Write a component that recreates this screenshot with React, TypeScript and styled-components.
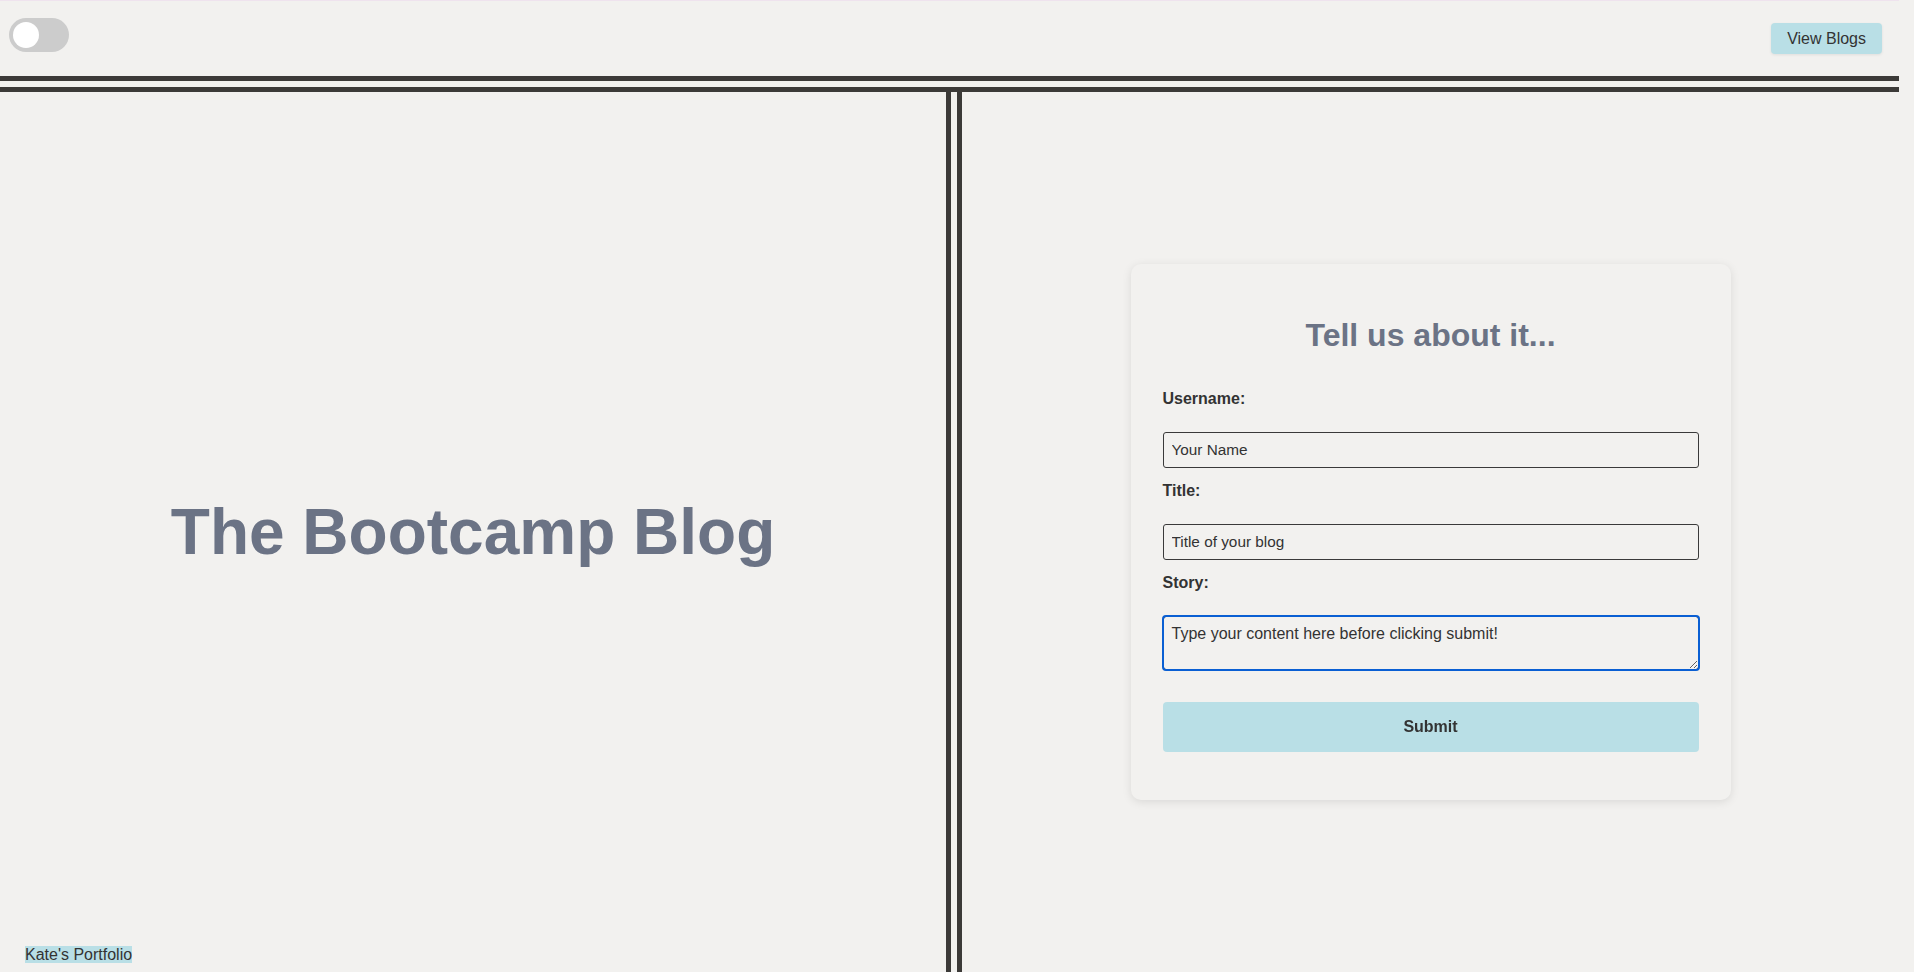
import React, { useEffect, useRef, useState } from 'react';
import styled, { createGlobalStyle } from 'styled-components';

const sans = `"Liberation Sans", Arial, sans-serif`;
const blue = '#b9dfe6';
const slate = '#6b7385';
const line = '#3c3a38';

const GlobalStyle = createGlobalStyle`
  html, body {
    margin: 0;
    padding: 0;
    background: #f2f1ef;
  }
  body {
    padding-right: 15px;
    font-family: ${sans};
    color: #333;
  }
  * {
    box-sizing: border-box;
  }
`;

const Header = styled.header`
  display: flex;
  justify-content: space-between;
  align-items: flex-start;
  height: 92px;
  padding: 17px 17px 0 9px;
  border-top: 1px solid #efe3ee;
  border-bottom: 16px double ${line};
`;

const Switch = styled.label`
  position: relative;
  display: inline-block;
  width: 60px;
  height: 34px;
  input {
    opacity: 0;
    width: 0;
    height: 0;
  }
`;

const Slider = styled.span<{ $on: boolean }>`
  position: absolute;
  inset: 0;
  cursor: pointer;
  background: ${(p) => (p.$on ? slate : '#ccc')};
  border-radius: 34px;
  transition: background 0.3s;
  &::before {
    content: '';
    position: absolute;
    width: 26px;
    height: 26px;
    left: 4px;
    bottom: 4px;
    background: #fff;
    border-radius: 50%;
    transform: translateX(${(p) => (p.$on ? '26px' : '0')});
    transition: transform 0.3s;
  }
`;

const ViewButton = styled.button`
  margin-top: 5px;
  height: 31px;
  padding: 0 16px;
  border: none;
  border-radius: 4px;
  background: ${blue};
  box-shadow: 0 1px 3px rgba(0, 0, 0, 0.08);
  color: #333;
  font-family: ${sans};
  font-size: 16px;
  cursor: pointer;
`;

const Main = styled.main`
  display: grid;
  grid-template-columns: 962px 1fr;
  height: calc(100vh - 92px);
`;

const LeftPanel = styled.section`
  display: flex;
  flex-direction: column;
  padding-top: 27px;
  border-right: 16px double ${line};
`;

const TitleWrap = styled.div`
  flex: 1;
  display: flex;
  align-items: center;
  justify-content: center;
`;

const BlogTitle = styled.h1`
  margin: 0;
  font-family: ${sans};
  font-size: 64px;
  line-height: 1;
  font-weight: 700;
  color: ${slate};
`;

const Footer = styled.footer`
  padding: 0 0 7px 25px;
  line-height: 20px;
`;

const PortfolioLink = styled.a`
  background: ${blue};
  color: #333;
  font-size: 16px;
  text-decoration: none;
`;

const RightPanel = styled.section`
  display: flex;
  align-items: center;
  justify-content: center;
`;

const Card = styled.form`
  width: 600px;
  padding: 51px 32px 48px;
  border-radius: 10px;
  background: #f2f1ef;
  box-shadow: 0 2px 10px rgba(0, 0, 0, 0.1);
`;

const FormTitle = styled.h2`
  margin: 0 0 34px;
  text-align: center;
  font-family: ${sans};
  font-size: 32px;
  line-height: 40px;
  font-weight: 700;
  color: ${slate};
`;

const Label = styled.label<{ $first?: boolean }>`
  display: block;
  margin: ${(p) => (p.$first ? '0' : '13px')} 0 23px;
  font-family: ${sans};
  font-size: 16px;
  line-height: 20px;
  font-weight: 700;
  color: #333;
`;

const TextInput = styled.input`
  display: block;
  width: 100%;
  height: 36px;
  padding: 0 8px;
  border: 1px solid #3a3a3a;
  border-radius: 3px;
  background: transparent;
  font-family: ${sans};
  font-size: 15.33px;
  color: #333;
  &::placeholder {
    color: #333;
  }
`;

const StoryInput = styled.textarea`
  display: block;
  width: 100%;
  height: 54px;
  padding: 8px 8px 6px;
  border: 1px solid #3a3a3a;
  border-radius: 3px;
  background: transparent;
  font-family: ${sans};
  font-size: 16px;
  color: #333;
  &:focus {
    outline: 2px solid #0a5fd3;
    outline-offset: -1px;
  }
`;

const SubmitButton = styled.button`
  display: block;
  width: 100%;
  height: 50px;
  margin-top: 32px;
  border: none;
  border-radius: 4px;
  background: ${blue};
  font-family: ${sans};
  font-size: 16px;
  font-weight: 700;
  color: #333;
  cursor: pointer;
`;

export default function App() {
  const [dark, setDark] = useState(false);
  const storyRef = useRef<HTMLTextAreaElement>(null);

  useEffect(() => {
    const el = storyRef.current;
    if (el) {
      el.focus();
      el.setSelectionRange(el.value.length, el.value.length);
    }
  }, []);

  return (
    <>
      <GlobalStyle />
      <Header>
        <Switch>
          <input type="checkbox" checked={dark} onChange={() => setDark(!dark)} />
          <Slider $on={dark} />
        </Switch>
        <ViewButton type="button">View Blogs</ViewButton>
      </Header>
      <Main>
        <LeftPanel>
          <TitleWrap>
            <BlogTitle>The Bootcamp Blog</BlogTitle>
          </TitleWrap>
          <Footer>
            <PortfolioLink href="#">Kate's Portfolio</PortfolioLink>
          </Footer>
        </LeftPanel>
        <RightPanel>
          <Card onSubmit={(e) => e.preventDefault()}>
            <FormTitle>Tell us about it...</FormTitle>
            <Label $first htmlFor="username">Username:</Label>
            <TextInput id="username" placeholder="Your Name" />
            <Label htmlFor="title">Title:</Label>
            <TextInput id="title" placeholder="Title of your blog" />
            <Label htmlFor="story">Story:</Label>
            <StoryInput
              id="story"
              ref={storyRef}
              defaultValue="Type your content here before clicking submit!"
            />
            <SubmitButton type="submit">Submit</SubmitButton>
          </Card>
        </RightPanel>
      </Main>
    </>
  );
}
